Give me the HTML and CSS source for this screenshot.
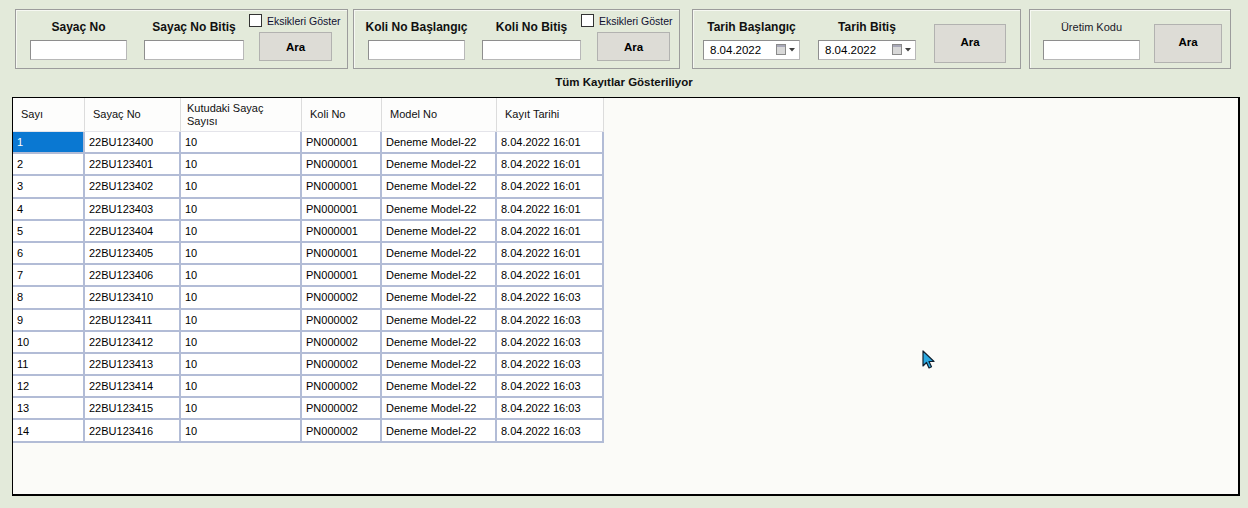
FILE: index.html
```html
<!DOCTYPE html>
<html lang="tr">
<head>
<meta charset="utf-8">
<title>Kayıtlar</title>
<link rel="stylesheet" href="styles.css">
</head>
<body>
<div class="toolbar">
  <div class="panel p1">
    <div class="field w97">
      <div class="lbl">Sayaç No</div>
      <div class="input"></div>
    </div>
    <div class="field w100 g17">
      <div class="lbl">Sayaç No Bitiş</div>
      <div class="input"></div>
    </div>
    <div class="side side1">
      <div class="chk"><span class="box"></span><span class="chk-text">Eksikleri Göster</span></div>
      <div class="btn btn-small">Ara</div>
    </div>
  </div>
  <div class="panel p2">
    <div class="field w97">
      <div class="lbl">Koli No Başlangıç</div>
      <div class="input"></div>
    </div>
    <div class="field w99 g17">
      <div class="lbl">Koli No Bitiş</div>
      <div class="input"></div>
    </div>
    <div class="side side2">
      <div class="chk"><span class="box"></span><span class="chk-text">Eksikleri Göster</span></div>
      <div class="btn btn-small">Ara</div>
    </div>
  </div>
  <div class="panel p3">
    <div class="field w97">
      <div class="lbl">Tarih Başlangıç</div>
      <div class="input date"><span class="date-text">8.04.2022</span>
        <svg class="cal" width="20" height="12" viewBox="0 0 20 12"><rect x="0.5" y="0.5" width="9" height="10" fill="#d8d8d8" stroke="#8a8a8a"/><rect x="1" y="1" width="8" height="2" fill="#a8a8b8"/><path d="M13 4h6l-3 3.5z" fill="#404040"/></svg>
      </div>
    </div>
    <div class="field w98 g18">
      <div class="lbl">Tarih Bitiş</div>
      <div class="input date"><span class="date-text">8.04.2022</span>
        <svg class="cal" width="20" height="12" viewBox="0 0 20 12"><rect x="0.5" y="0.5" width="9" height="10" fill="#d8d8d8" stroke="#8a8a8a"/><rect x="1" y="1" width="8" height="2" fill="#a8a8b8"/><path d="M13 4h6l-3 3.5z" fill="#404040"/></svg>
      </div>
    </div>
    <div class="btn btn-big b3">Ara</div>
  </div>
  <div class="panel p4">
    <div class="field w97">
      <div class="lbl lbl-reg">Üretim Kodu</div>
      <div class="input"></div>
    </div>
    <div class="btn btn-big b4">Ara</div>
  </div>
</div>
<div class="title">Tüm Kayıtlar Gösteriliyor</div>
<div class="grid">
  <div class="table">
    <div class="th">Sayı</div><div class="th">Sayaç No</div><div class="th th-wrap">Kutudaki Sayaç Sayısı</div><div class="th">Koli No</div><div class="th">Model No</div><div class="th">Kayıt Tarihi</div>
    <div class="td sel">1</div><div class="td">22BU123400</div><div class="td">10</div><div class="td">PN000001</div><div class="td">Deneme Model-22</div><div class="td">8.04.2022 16:01</div>
    <div class="td">2</div><div class="td">22BU123401</div><div class="td">10</div><div class="td">PN000001</div><div class="td">Deneme Model-22</div><div class="td">8.04.2022 16:01</div>
    <div class="td">3</div><div class="td">22BU123402</div><div class="td">10</div><div class="td">PN000001</div><div class="td">Deneme Model-22</div><div class="td">8.04.2022 16:01</div>
    <div class="td">4</div><div class="td">22BU123403</div><div class="td">10</div><div class="td">PN000001</div><div class="td">Deneme Model-22</div><div class="td">8.04.2022 16:01</div>
    <div class="td">5</div><div class="td">22BU123404</div><div class="td">10</div><div class="td">PN000001</div><div class="td">Deneme Model-22</div><div class="td">8.04.2022 16:01</div>
    <div class="td">6</div><div class="td">22BU123405</div><div class="td">10</div><div class="td">PN000001</div><div class="td">Deneme Model-22</div><div class="td">8.04.2022 16:01</div>
    <div class="td">7</div><div class="td">22BU123406</div><div class="td">10</div><div class="td">PN000001</div><div class="td">Deneme Model-22</div><div class="td">8.04.2022 16:01</div>
    <div class="td">8</div><div class="td">22BU123410</div><div class="td">10</div><div class="td">PN000002</div><div class="td">Deneme Model-22</div><div class="td">8.04.2022 16:03</div>
    <div class="td">9</div><div class="td">22BU123411</div><div class="td">10</div><div class="td">PN000002</div><div class="td">Deneme Model-22</div><div class="td">8.04.2022 16:03</div>
    <div class="td">10</div><div class="td">22BU123412</div><div class="td">10</div><div class="td">PN000002</div><div class="td">Deneme Model-22</div><div class="td">8.04.2022 16:03</div>
    <div class="td">11</div><div class="td">22BU123413</div><div class="td">10</div><div class="td">PN000002</div><div class="td">Deneme Model-22</div><div class="td">8.04.2022 16:03</div>
    <div class="td">12</div><div class="td">22BU123414</div><div class="td">10</div><div class="td">PN000002</div><div class="td">Deneme Model-22</div><div class="td">8.04.2022 16:03</div>
    <div class="td">13</div><div class="td">22BU123415</div><div class="td">10</div><div class="td">PN000002</div><div class="td">Deneme Model-22</div><div class="td">8.04.2022 16:03</div>
    <div class="td">14</div><div class="td">22BU123416</div><div class="td">10</div><div class="td">PN000002</div><div class="td">Deneme Model-22</div><div class="td">8.04.2022 16:03</div>
  </div>
  <svg class="cursor" width="14" height="20" viewBox="0 0 14 20"><path d="M1 1v15l3.5-3.5 2.5 5.5 2.5-1.2-2.5-5.3H12z" fill="#2aa8e0" stroke="#102030" stroke-width="1.2" stroke-linejoin="round"/></svg>
</div>
</body>
</html>
```
FILE: styles.css
```css
* { box-sizing: border-box; }
html, body { margin: 0; padding: 0; }
body {
  width: 1248px;
  height: 508px;
  overflow: hidden;
  background: #e3eada;
  font-family: "Liberation Sans", Arial, sans-serif;
  font-size: 11px;
  color: #000;
}
.toolbar {
  display: flex;
  padding-top: 9px;
  height: 69px;
}
.panel {
  display: flex;
  align-items: flex-start;
  height: 60px;
  border: 1px solid #9c9c9c;
  box-shadow: inset 1px 1px 0 #f6f8f2;
}
.p1 { margin-left: 15px; width: 333px; padding-left: 14px; }
.p2 { margin-left: 5px; width: 327px; padding-left: 14px; }
.p3 { margin-left: 12px; width: 329px; padding-left: 10px; }
.p4 { margin-left: 8px; width: 202px; padding-left: 13px; }

.field { display: flex; flex-direction: column; align-items: center; padding-top: 10px; }
.w97 { width: 97px; }
.w98 { width: 98px; }
.w99 { width: 99px; }
.w100 { width: 100px; }
.g17 { margin-left: 17px; }
.g18 { margin-left: 18px; }

.lbl {
  height: 14px;
  line-height: 14px;
  font-size: 12px;
  font-weight: bold;
  white-space: nowrap;
  color: #101010;
}
.lbl-reg { font-weight: normal; font-size: 11px; color: #201828; }
.input {
  margin-top: 6px;
  width: 100%;
  height: 20px;
  background: #fff;
  border: 1px solid #8e8e8e;
  border-right-color: #b8b8b8;
  border-bottom-color: #b8b8b8;
}
.date {
  display: flex;
  align-items: center;
  padding-left: 6px;
}
.date-text { flex: 1; font-size: 11.5px; }
.cal { margin-right: 3px; }

.side { display: flex; flex-direction: column; padding-top: 4px; }
.side1 { margin-left: 5px; }
.side2 { margin-left: 0; }
.chk { display: flex; align-items: center; height: 13px; white-space: nowrap; }
.box {
  width: 13px;
  height: 13px;
  background: #fff;
  border: 1px solid #333;
}
.chk-text { margin-left: 5px; font-size: 10.5px; color: #101030; }
.btn {
  display: flex;
  align-items: center;
  justify-content: center;
  background: #dddcd6;
  border: 1px solid #b2b2b0;
  font-weight: bold;
  font-size: 11.5px;
}
.btn-small { margin-top: 5px; width: 73px; height: 29px; }
.side1 .btn-small { margin-left: 10px; }
.side2 .btn-small { margin-left: 16px; }
.btn-big { margin-top: 14px; height: 39px; padding-bottom: 4px; }
.b3 { margin-left: 18px; width: 72px; }
.b4 { margin-left: 14px; width: 68px; }

.title {
  margin-top: 6px;
  height: 14px;
  line-height: 14px;
  text-align: center;
  font-weight: bold;
  font-size: 11.5px;
  color: #101010;
}
.grid {
  position: relative;
  margin: 8px 0 0 12px;
  width: 1228px;
  height: 399px;
  background: #fbfbf8;
  border: 1px solid #000;
  border-right-width: 2px;
  border-bottom-width: 2px;
}
.table {
  display: grid;
  grid-template-columns: 72px 96px 121px 80px 115px 107px;
  grid-template-rows: 34px repeat(14, 22.2px);
  width: 591px;
}
.th {
  display: flex;
  align-items: center;
  padding-left: 8px;
  background: #fdfdfc;
  border-right: 1px solid #dcdcdc;
  border-bottom: 1px solid #e4e4ea;
  line-height: 13px;
  color: #101010;
}
.th-wrap { padding-left: 6px; padding-right: 20px; }
.td {
  display: flex;
  align-items: center;
  padding-left: 4px;
  background: #fff;
  border-right: 2px solid #b2bcd6;
  border-bottom: 2px solid #b2bcd6;
  white-space: nowrap;
  overflow: hidden;
}
.td.sel { background: #0a78d2; color: #fff; }
.cursor { position: absolute; left: 909px; top: 252px; }
```
